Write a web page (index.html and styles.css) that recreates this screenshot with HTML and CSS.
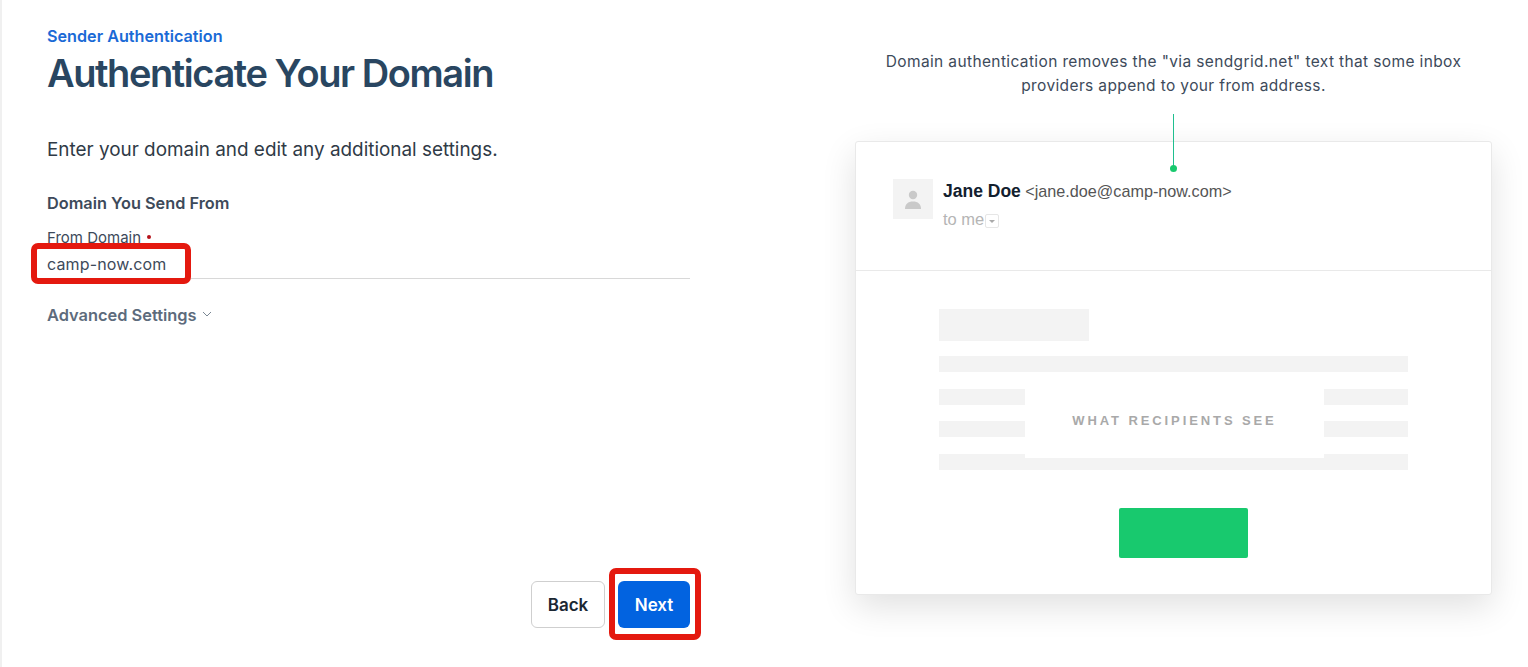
FILE: index.html
```html
<!DOCTYPE html>
<html lang="en">
<head>
  <meta charset="UTF-8" />
  <title>Authenticate Your Domain</title>
  <link rel="stylesheet" href="styles.css">
</head>
<body>
  <div class="page">

    <!-- Form column -->
    <main class="form-col">
      <div class="eyebrow">Sender Authentication</div>
      <h1>Authenticate Your Domain</h1>
      <p class="intro">Enter your domain and edit any additional settings.</p>
      <h2>Domain You Send From</h2>

      <div class="field">
        <label for="fromDomain">From Domain <span class="req"></span></label>
        <div class="input-line">
          <span class="input-value" id="fromDomain">camp-now.com</span>
          <span class="mark mark-input"></span>
        </div>
      </div>

      <div class="advanced">
        Advanced Settings
        <svg class="chevron" width="10" height="6" viewBox="0 0 10 6"><path d="M1 1l4 4 4-4" fill="none" stroke="#7a8794" stroke-width="1"/></svg>
      </div>

      <div class="actions">
        <button class="btn btn-back" type="button">Back</button>
        <div class="next-wrap">
          <button class="btn btn-next" type="button">Next</button>
          <span class="mark mark-next"></span>
        </div>
      </div>
    </main>

    <!-- Preview column -->
    <aside class="preview-col">
      <p class="caption">Domain authentication removes the "via sendgrid.net" text that some inbox<br>providers append to your from address.</p>

      <div class="card">
        <div class="pointer"></div>

        <div class="mail-head">
          <div class="avatar">
            <svg width="16" height="20" viewBox="0 0 16 20"><circle cx="8" cy="5" r="4.2" fill="#c9c9c9"/><path d="M0 19c0-5 3-7.500 8-7.500s8 2.500 8 7.500z" fill="#c9c9c9"/></svg>
          </div>
          <div>
            <div class="sender"><strong>Jane Doe</strong> &lt;jane.doe@camp-now.com&gt;</div>
            <div class="to">to me<span class="to-drop"></span></div>
          </div>
        </div>

        <div class="mail-body">
          <div class="sk sk-title"></div>
          <div class="sk-lines">
            <div class="sk"></div>
            <div class="sk"></div>
            <div class="sk"></div>
            <div class="sk"></div>
            <div class="see-label">WHAT RECIPIENTS SEE</div>
          </div>
          <div class="cta"></div>
        </div>
      </div>
    </aside>

  </div>
</body>
</html>
```

FILE: styles.css
```css
* {
  box-sizing: border-box;
}

body {
  margin: 0;
  background: white;
  font-family: 'Inter', sans-serif;
  color: #2f3a46;
}

.page {
  display: flex;
  height: 667px;
  overflow: hidden;
  border-left: 2px solid #f0f0f0;
}

/* Form column */
.form-col {
  display: flex;
  flex-direction: column;
  width: 643px;
  margin-left: 45px;
  padding-top: 27px;
  padding-bottom: 39px;
}

.eyebrow {
  font-size: 16.200px;
  font-weight: 600;
  line-height: 18px;
  color: #1a6ad6;
}

h1 {
  margin: 5px 0 0;
  font-size: 38px;
  font-weight: 600;
  line-height: 46px;
  letter-spacing: -1.43px;
  color: #294661;
}

.intro {
  margin: 42px 0 0;
  font-size: 18.900px;
  line-height: 24px;
  color: #2f3a46;
}

h2 {
  margin: 31px 0 0;
  font-size: 16.300px;
  font-weight: 600;
  line-height: 20px;
  color: #3d4a5a;
}

.field {
  margin-top: 16px;
}

label {
  display: block;
  font-size: 15px;
  line-height: 18px;
  color: #3d4a5a;
}

.req {
  display: inline-block;
  width: 4px;
  height: 4px;
  margin-left: 2px;
  vertical-align: 4px;
  border-radius: 50%;
  background: #b5121b;
}

.input-line {
  position: relative;
  height: 32px;
  padding-top: 7px;
  border-bottom: 1px solid #d8d8d8;
  font-size: 16px;
  line-height: 20px;
  letter-spacing: 0.16px;
  color: #3d4a5a;
}

.advanced {
  margin-top: 26px;
  font-size: 16.400px;
  font-weight: 600;
  line-height: 20px;
  color: #5d6b7c;
}

.chevron {
  margin-left: 1px;
  vertical-align: 4px;
}

.actions {
  display: flex;
  justify-content: flex-end;
  gap: 13px;
  margin-top: auto;
}

.next-wrap {
  position: relative;
}

.btn {
  display: block;
  height: 47px;
  border-radius: 6px;
  font-family: inherit;
  font-size: 17px;
  font-weight: 600;
  cursor: pointer;
}

.btn-back {
  width: 74px;
  background: white;
  border: 1px solid #cfcfcf;
  color: #1b2733;
}

.btn-next {
  width: 72px;
  background: #0263e0;
  border: none;
  color: white;
}

/* Red annotation boxes */
.mark {
  position: absolute;
  border: 6px solid #e4190f;
  border-radius: 7px;
  pointer-events: none;
}

.mark-input {
  left: -16px;
  top: -4px;
  width: 160px;
  height: 41px;
}

.mark-next {
  left: -9px;
  top: -13px;
  width: 92px;
  height: 72px;
}

/* Preview column */
.preview-col {
  width: 637px;
  margin-left: 165px;
  padding-top: 49px;
}

.caption {
  margin: 1px 0 0;
  text-align: center;
  font-size: 15.500px;
  line-height: 24px;
  letter-spacing: 0.37px;
  color: #3d4a5a;
}

.card {
  position: relative;
  height: 454px;
  margin-top: 43px;
  background: white;
  border: 1px solid #e9e9e9;
  border-radius: 3px;
  box-shadow: 0 12px 34px rgba(0, 0, 0, 0.12);
  font-family: 'Liberation Sans', Arial, sans-serif;
}

.pointer {
  position: absolute;
  left: 317px;
  top: -28px;
  width: 1px;
  height: 54px;
  background: #1fbf8f;
}

.pointer::after {
  content: '';
  position: absolute;
  left: -3px;
  bottom: -4px;
  width: 7px;
  height: 7px;
  border-radius: 50%;
  background: #18c96e;
}

.mail-head {
  display: flex;
  gap: 10px;
  height: 129px;
  padding: 37px 0 0 37px;
  border-bottom: 1px solid #e9e9e9;
}

.avatar {
  display: flex;
  align-items: flex-end;
  justify-content: center;
  width: 40px;
  height: 40px;
  padding-bottom: 9px;
  background: #f3f3f3;
}

.sender {
  font-size: 16.200px;
  line-height: 24px;
  color: #555;
}

.sender strong {
  font-size: 17.500px;
  color: #12202e;
}

.to {
  margin-top: 6px;
  font-size: 16.500px;
  line-height: 20px;
  color: #b5b5b5;
}

.to-drop {
  display: inline-block;
  position: relative;
  width: 14px;
  height: 14px;
  margin-left: 1px;
  vertical-align: -3px;
  border: 1px solid #e6e6e6;
  border-radius: 2px;
}

.to-drop::after {
  content: '';
  position: absolute;
  left: 3px;
  top: 5px;
  border: 3px solid transparent;
  border-top: 3px solid #aaa;
  border-bottom: none;
}

.mail-body {
  padding: 38px 83px 0;
}

.sk {
  height: 16px;
  background: #f3f3f3;
}

.sk-title {
  width: 150px;
  height: 32px;
}

.sk-lines {
  position: relative;
  display: flex;
  flex-direction: column;
  gap: 16.500px;
  margin-top: 15px;
}

.see-label {
  position: absolute;
  left: 86px;
  top: 24px;
  width: 299px;
  height: 78px;
  padding-top: 2px;
  display: flex;
  align-items: center;
  justify-content: center;
  background: white;
  font-size: 13px;
  font-weight: 700;
  letter-spacing: 2.9px;
  color: #a9a9a9;
}

.cta {
  width: 129px;
  height: 50px;
  margin: 38px 0 0 180px;
  border-radius: 2px;
  background: #18c96e;
}
```
